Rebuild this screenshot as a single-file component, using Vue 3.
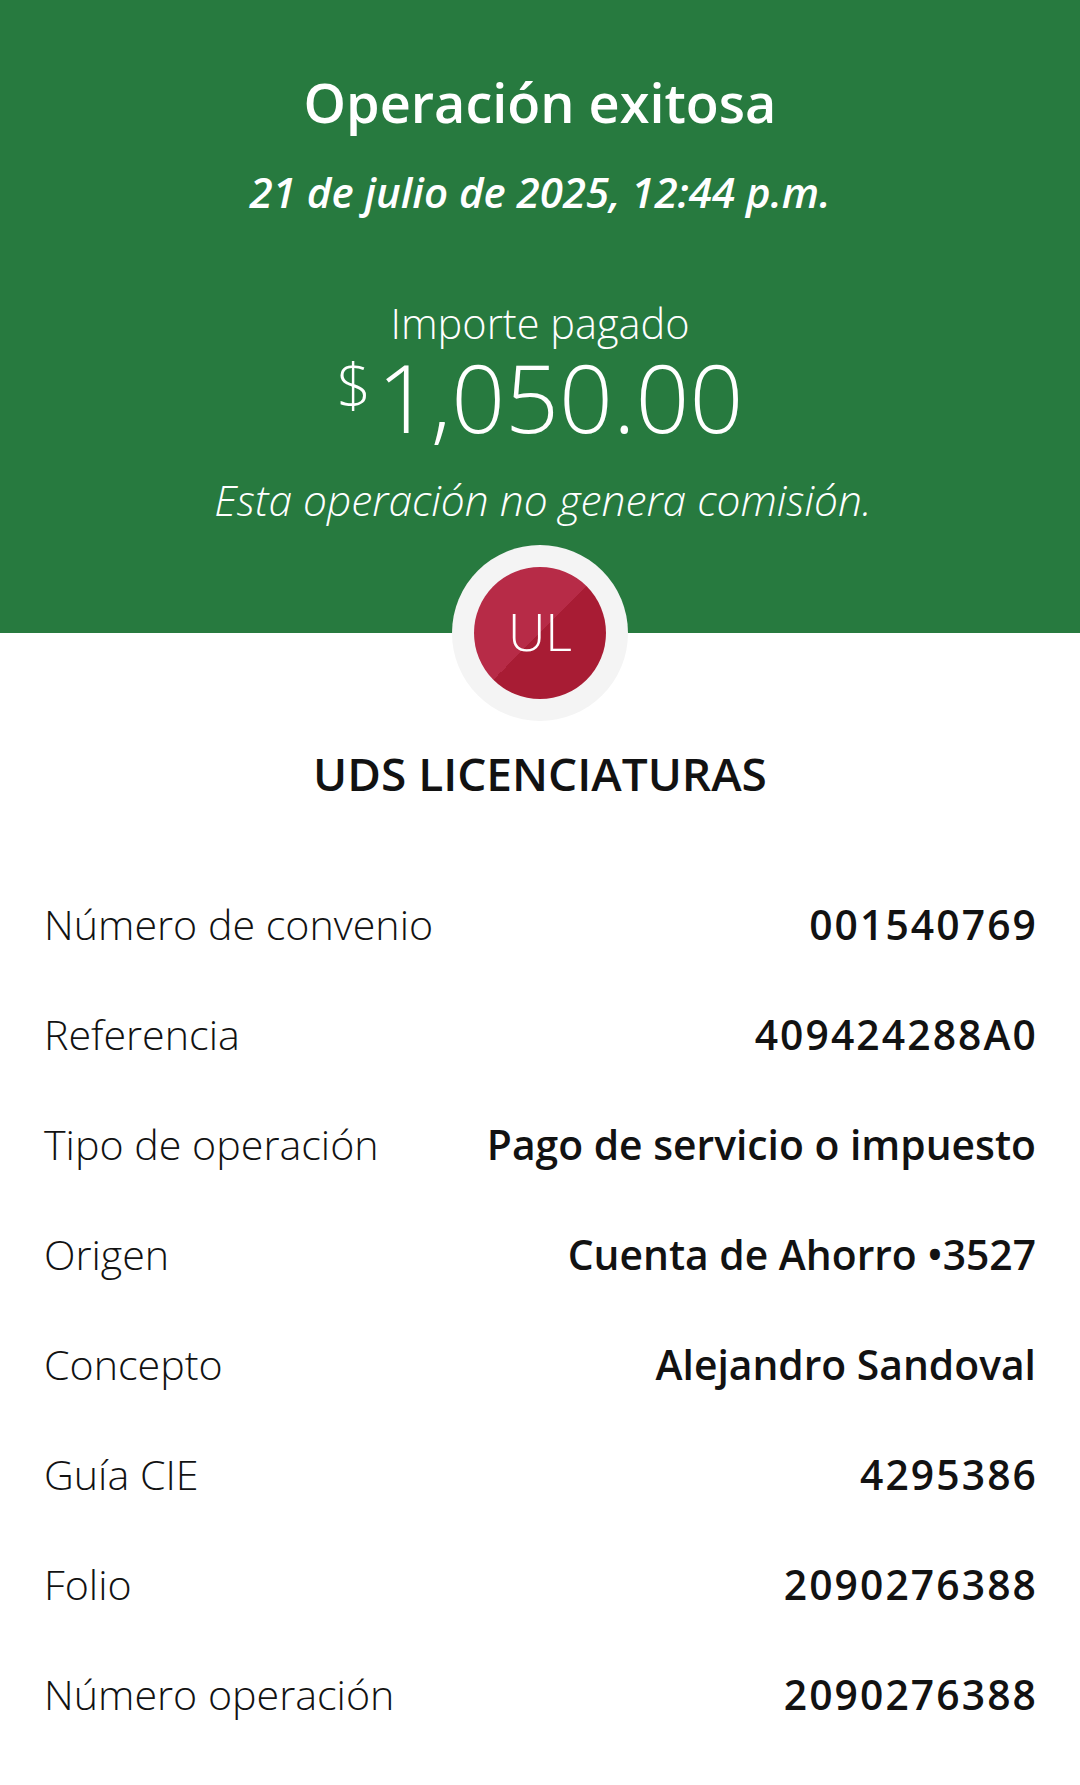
<template>
  <div class="receipt">
    <header class="banner">
      <h1>Operación exitosa</h1>
      <p class="date">21 de julio de 2025, 12:44 p.m.</p>
      <p class="amount-label">Importe pagado</p>
      <p class="amount"><span class="currency">$</span>1,050.00</p>
      <p class="note">Esta operación no genera comisión.</p>
    </header>

    <div class="avatar-ring">
      <div class="avatar">UL</div>
    </div>
    <h2 class="company">UDS LICENCIATURAS</h2>

    <dl class="details">
      <div v-for="row in rows" :key="row.label" class="row">
        <dt>{{ row.label }}</dt>
        <dd :class="{ num: row.num }">{{ row.value }}</dd>
      </div>
    </dl>
  </div>
</template>

<script setup>
const rows = [
  { label: 'Número de convenio', value: '001540769', num: true },
  { label: 'Referencia', value: '409424288A0', num: true },
  { label: 'Tipo de operación', value: 'Pago de servicio o impuesto' },
  { label: 'Origen', value: 'Cuenta de Ahorro •3527' },
  { label: 'Concepto', value: 'Alejandro Sandoval' },
  { label: 'Guía CIE', value: '4295386', num: true },
  { label: 'Folio', value: '2090276388', num: true },
  { label: 'Número operación', value: '2090276388', num: true },
]
</script>

<style>
html,
body {
  margin: 0;
  background: #fff;
}
</style>

<style scoped>
.receipt {
  width: 1080px;
  min-height: 1785px;
  background: #fff;
  color: #121212;
  font-family: 'Open Sans', 'Liberation Sans', sans-serif;
}

.banner {
  height: 633px;
  box-sizing: border-box;
  padding-top: 68px;
  background: #277a3f;
  color: #fff;
  text-align: center;
}

.banner h1,
.banner p {
  margin: 0;
}

h1 {
  font-size: 54px;
  line-height: 68px;
  font-weight: 600;
}

.date {
  margin-top: 32px !important;
  font-size: 42px;
  line-height: 48px;
  font-weight: 600;
  font-style: italic;
}

.amount-label {
  margin-top: 83px !important;
  font-size: 41.5px;
  line-height: 48px;
  font-weight: 300;
}

.amount {
  margin-top: -2px !important;
  font-size: 94.5px;
  line-height: 104px;
  font-weight: 300;
}

.currency {
  font-size: 60px;
  vertical-align: 25px;
  line-height: 0;
  margin-right: 6px;
}

.note {
  margin-top: 26px !important;
  padding-left: 6px;
  font-size: 42.5px;
  line-height: 50px;
  font-weight: 300;
  font-style: italic;
}

.avatar-ring {
  position: relative;
  width: 176px;
  height: 176px;
  margin: -88px auto 0;
  display: flex;
  align-items: center;
  justify-content: center;
  border-radius: 50%;
  background: #f4f4f4;
}

.avatar {
  width: 132px;
  height: 132px;
  box-sizing: border-box;
  padding-bottom: 5px;
  display: flex;
  align-items: center;
  justify-content: center;
  border-radius: 50%;
  background: linear-gradient(135deg, #b72b47 50%, #a81c34 50%);
  color: #fff;
  font-size: 52px;
  font-weight: 300;
}

.company {
  margin: 28px 0 0;
  text-align: center;
  font-size: 46px;
  line-height: 48px;
  font-weight: 600;
}

.details {
  margin: 72px 0 0;
  padding: 0 44px;
}

.row {
  height: 110px;
  display: flex;
  align-items: center;
  justify-content: space-between;
}

dt {
  font-size: 41.2px;
  font-weight: 300;
}

dd {
  margin: 0;
  font-size: 40.8px;
  font-weight: 600;
  text-align: right;
}

dd.num {
  margin-right: -2px;
  letter-spacing: 2.1px;
}
</style>
